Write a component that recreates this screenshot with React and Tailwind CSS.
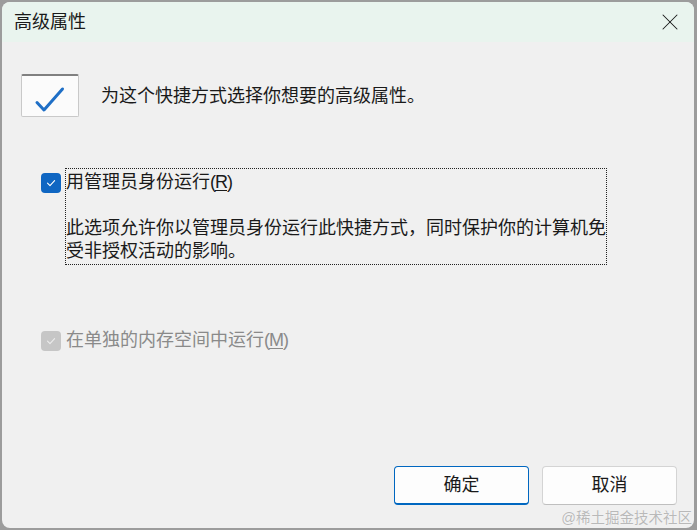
import { X } from "lucide-react";

const FONT = { fontFamily: '"Liberation Sans", "Noto Sans CJK SC", sans-serif' };

function Checkbox({ disabled }) {
  return (
    <div
      className={`w-[20px] h-[20px] rounded-[4px] flex items-center justify-center shrink-0 ${
        disabled ? "bg-[#c6c6c6]" : "bg-[#0f66c2]"
      }`}
    >
      <svg width="12" height="12" viewBox="0 0 12 12">
        <polyline
          points="2.5,6.2 5,8.6 9.6,3.6"
          fill="none"
          stroke={disabled ? "#ececec" : "#ffffff"}
          strokeWidth="1.1"
          strokeLinecap="round"
          strokeLinejoin="round"
        />
      </svg>
    </div>
  );
}

// 快捷键字母，带下划线
function Hotkey({ k }) {
  return (
    <span className="tracking-[-1px]">
      (<span className="underline underline-offset-2">{k}</span>)
    </span>
  );
}

export default function App() {
  return (
    <div className="w-[697px] h-[530px] bg-[#9c9c9c] pt-[2px] pl-[2px] overflow-hidden" style={FONT}>
      <div className="relative w-[692px] h-[526px] rounded-[8px] overflow-hidden bg-[#f0f0f0] flex flex-col text-[#1a1a1a]">
        {/* 标题栏 */}
        <div className="h-[40px] shrink-0 bg-[#e9f4ee] flex items-center justify-between pl-[12px] pr-[10px]">
          <span className="text-[18px] leading-none">高级属性</span>
          <X size={28} strokeWidth={0.9} className="text-[#1a1a1a]" />
        </div>

        <div className="flex-1 flex flex-col pl-[19px] pt-[32px]">
          {/* 图标 + 说明 */}
          <div className="flex items-center gap-[22px]">
            <div className="w-[58px] h-[43px] bg-[#fbfbfb] border border-[#c9c9c9] border-t-2 border-t-[#808080] rounded-[2px] flex items-center justify-center">
              <svg width="58" height="43" viewBox="0 0 58 43" className="shrink-0">
                <polyline
                  points="16,27.5 23,35 41.5,14"
                  fill="none"
                  stroke="#1f6fc6"
                  strokeWidth="3"
                  strokeLinecap="round"
                  strokeLinejoin="round"
                />
              </svg>
            </div>
            <span className="text-[18px] leading-[24px]">为这个快捷方式选择你想要的高级属性。</span>
          </div>

          {/* 以管理员身份运行 */}
          <div className="flex items-start gap-[4px] ml-[20px] mt-[51px]">
            <div className="mt-[5px]">
              <Checkbox />
            </div>
            <div className="w-[542px] border border-dotted border-[#222] pt-[2px] pb-[1px] text-[18px] leading-[23px] whitespace-nowrap">
              <div>
                用管理员身份运行<Hotkey k="R" />
              </div>
              <div className="h-[23px]" />
              <div>此选项允许你以管理员身份运行此快捷方式，同时保护你的计算机免</div>
              <div>受非授权活动的影响。</div>
            </div>
          </div>

          {/* 单独内存空间 */}
          <div className="flex items-center gap-[5px] ml-[20px] mt-[64px]">
            <Checkbox disabled />
            <span className="text-[18px] leading-[23px] text-[#8a8a8a] whitespace-nowrap">
              在单独的内存空间中运行<Hotkey k="M" />
            </span>
          </div>

          <div className="flex-1" />

          {/* 按钮 */}
          <div className="flex justify-end gap-[13px] pr-[17px] pb-[23px]">
            <button className="w-[135px] h-[39px] bg-[#fdfdfd] border border-[#0067c0] border-b-2 rounded-[4px] text-[18px]">
              确定
            </button>
            <button className="w-[135px] h-[39px] bg-[#fdfdfd] border border-[#d4d4d4] border-b-[#bfbfbf] rounded-[4px] text-[18px]">
              取消
            </button>
          </div>
        </div>

        {/* 水印 */}
        <span
          className="absolute right-[2px] bottom-[1px] text-[14.5px] leading-[18px] text-[#b9b9b9]"
          style={{ textShadow: "0 0 1px #ffffff" }}
        >
          @稀土掘金技术社区
        </span>
      </div>
    </div>
  );
}
